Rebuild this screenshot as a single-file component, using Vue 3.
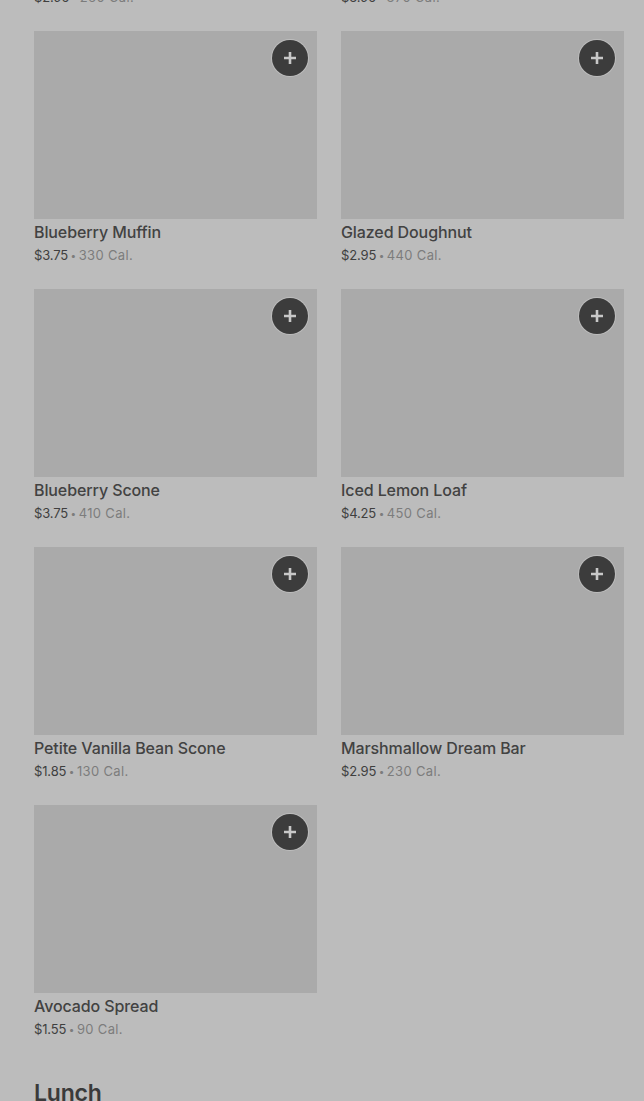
<script setup>
const items = [
  { name: 'Chocolate Croissant', price: '$2.95', cal: '260 Cal.' },
  { name: 'Cheese Danish', price: '$3.95', cal: '370 Cal.' },
  { name: 'Blueberry Muffin', price: '$3.75', cal: '330 Cal.' },
  { name: 'Glazed Doughnut', price: '$2.95', cal: '440 Cal.' },
  { name: 'Blueberry Scone', price: '$3.75', cal: '410 Cal.' },
  { name: 'Iced Lemon Loaf', price: '$4.25', cal: '450 Cal.' },
  { name: 'Petite Vanilla Bean Scone', price: '$1.85', cal: '130 Cal.' },
  { name: 'Marshmallow Dream Bar', price: '$2.95', cal: '230 Cal.' },
  { name: 'Avocado Spread', price: '$1.55', cal: '90 Cal.' }
]
</script>

<template>
  <div class="page">
    <div class="grid">
      <div v-for="item in items" :key="item.name" class="card">
        <div class="thumb">
          <button class="add" aria-label="Add">
            <svg width="14" height="14" viewBox="0 0 14 14">
              <path d="M7 1v12M1 7h12" stroke="#c8c8c8" stroke-width="2.6" fill="none" />
            </svg>
          </button>
        </div>
        <div class="name">{{ item.name }}</div>
        <div class="meta">
          <span class="price">{{ item.price }}</span>
          <span class="dot">•</span>
          <span class="cal">{{ item.cal }}</span>
        </div>
      </div>
    </div>
    <h2 class="section">Lunch</h2>
  </div>
</template>

<style>
html, body {
  margin: 0;
  background: #bcbcbc;
}
</style>

<style scoped>
.page {
  height: 1101px;
  overflow: hidden;
  padding: 0 20px 0 34px;
  box-sizing: border-box;
  background: #bcbcbc;
  font-family: Inter, "Noto Sans", sans-serif;
}

.grid {
  display: grid;
  grid-template-columns: 283px 283px;
  column-gap: 24px;
  margin-top: -227px;
}

.card {
  height: 258px;
}

.thumb {
  height: 188px;
  background: #aaaaaa;
  display: flex;
  justify-content: flex-end;
  align-items: flex-start;
  padding: 9px 9px 0 0;
  box-sizing: border-box;
}

.add {
  width: 36px;
  height: 36px;
  border-radius: 50%;
  border: 0;
  padding: 0;
  background: #3c3c3c;
  box-shadow: 0 0 0 1px #bdbdbd;
  display: flex;
  align-items: center;
  justify-content: center;
}

.name {
  margin-top: 2px;
  font-size: 16px;
  line-height: 22px;
  font-weight: 500;
  letter-spacing: -0.1px;
  color: #424242;
}

.meta {
  margin-top: 1px;
  font-size: 13px;
  line-height: 22px;
  color: #7c7c7c;
  display: flex;
  gap: 2.5px;
}

.price {
  color: #3f3f3f;
  letter-spacing: -0.15px;
}

.dot {
  font-size: 10px;
}

.cal {
  letter-spacing: 0.35px;
}

.section {
  margin: 0;
  margin-top: 14px;
  font-size: 23px;
  line-height: 32px;
  font-weight: 600;
  letter-spacing: -0.2px;
  color: #3a3a3a;
}
</style>
